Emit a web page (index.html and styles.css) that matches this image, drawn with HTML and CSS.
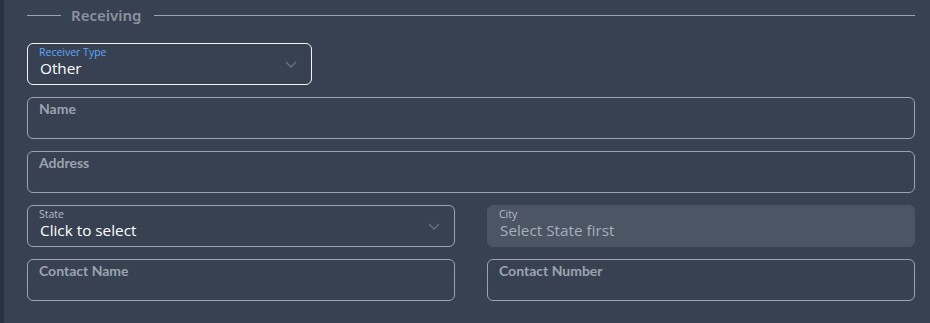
FILE: index.html
```html
<!DOCTYPE html>
<html>
<head>
<meta charset="utf-8">
<link rel="stylesheet" href="styles.css">
</head>
<body>
<div class="page">
  <div class="section">
    <div class="legend">
      <span class="line short"></span>
      <span class="legend-text">Receiving</span>
      <span class="line grow"></span>
    </div>
    <div class="form">
      <div class="row">
        <div class="field select active narrow">
          <span class="small-label blue">Receiver Type</span>
          <span class="value">Other</span>
          <svg class="chev" width="12" height="7" viewBox="0 0 12 7"><path d="M1 1l5 5 5-5" fill="none" stroke="#6b7280" stroke-width="1.3"/></svg>
        </div>
      </div>
      <div class="row">
        <div class="field text"><span class="ph">Name</span></div>
      </div>
      <div class="row">
        <div class="field text"><span class="ph">Address</span></div>
      </div>
      <div class="row two">
        <div class="field select">
          <span class="small-label">State</span>
          <span class="value">Click to select</span>
          <svg class="chev" width="12" height="7" viewBox="0 0 12 7"><path d="M1 1l5 5 5-5" fill="none" stroke="#6b7280" stroke-width="1.3"/></svg>
        </div>
        <div class="field select disabled">
          <span class="small-label">City</span>
          <span class="value muted">Select State first</span>
        </div>
      </div>
      <div class="row two">
        <div class="field text"><span class="ph">Contact Name</span></div>
        <div class="field text"><span class="ph">Contact Number</span></div>
      </div>
    </div>
  </div>
</div>
</body>
</html>
```
FILE: styles.css
```css
html, body {
  margin: 0;
  padding: 0;
  background: #374151;
  height: 100%;
}
body {
  font-family: "Open Sans", "Noto Sans", "Liberation Sans", sans-serif;
  color: #fff;
}
.page {
  border-left: 4px solid #283140;
  min-height: 323px;
  box-sizing: border-box;
  padding: 4px 15px 0 23px;
}
.legend {
  display: flex;
  align-items: center;
  height: 22px;
}
.line {
  height: 1px;
  background: #9ca3af;
}
.line.short { width: 34px; }
.line.grow { flex: 1; }
.legend-text {
  font-family: "Noto Sans", "Open Sans", sans-serif;
  font-size: 15px;
  font-weight: 600;
  color: #8b929e;
  padding: 0 13px 0 10px;
}
.form {
  margin-top: 17px;
  display: flex;
  flex-direction: column;
  gap: 12px;
}
.row {
  display: flex;
  gap: 32px;
}
.row.two > .field { flex: 1; }
.row > .field.text, .row > .field.select { flex: 1; }
.row > .field.narrow { flex: 0 0 285px; }
.field {
  position: relative;
  height: 42px;
  box-sizing: border-box;
  border: 1px solid #9ca3af;
  border-radius: 6px;
  padding: 0 11px;
  display: flex;
  flex-direction: column;
}
.field.active { border-color: #f3f4f6; }
.field.disabled {
  background: #4b5563;
  border-color: #4b5563;
}
.small-label {
  font-size: 10.5px;
  line-height: 13px;
  margin-top: 2px;
  color: #b8bec8;
}
.small-label.blue { color: #60a5fa; }
.value {
  font-size: 15.3px;
  line-height: 20px;
  color: #ffffff;
  margin-top: -1px;
  padding-left: 1px;
}
.value.muted { color: #a8afba; }
.ph {
  font-family: "Lato", "Open Sans", sans-serif;
  font-weight: 700;
  font-size: 14px;
  line-height: 16px;
  margin-top: 3px;
  color: #9ca3af;
}
.chev {
  position: absolute;
  right: 14px;
  top: 17px;
}
```
